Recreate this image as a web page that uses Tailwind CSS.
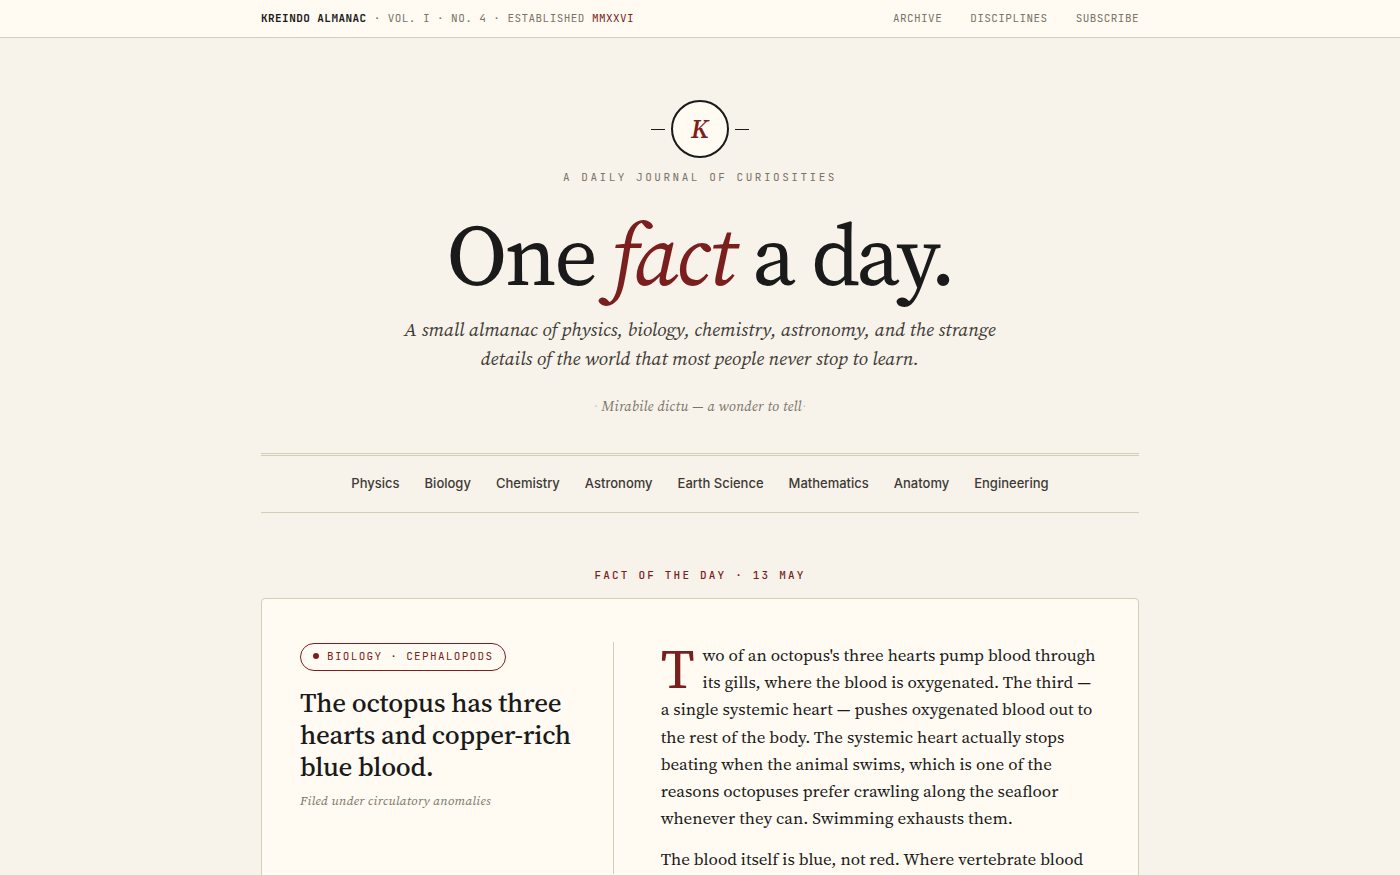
<!DOCTYPE html>
<html lang="en">
<head>
  <meta charset="UTF-8">
  <meta name="viewport" content="width=device-width, initial-scale=1.0">
  <title>Kreindo Almanac</title>
  <script src="https://cdn.jsdelivr.net/npm/@tailwindcss/browser@4"></script>
</head>
<body class="bg-[#f7f2ea] text-[#1a1a1a] font-['Source_Serif_4','Liberation_Serif',serif]">
  <div class="bg-[#fffbf2] border-b border-[#d4cdb8]">
    <div class="max-w-[878px] mx-auto pt-2.5 pb-[11px] flex items-center justify-between font-['JetBrains_Mono','Liberation_Mono',monospace] text-[11px] leading-4 tracking-[0.04em] uppercase text-[#7a7468]">
      <p><strong class="font-semibold text-[#1a1a1a]">Kreindo Almanac</strong> · Vol. I · No. 4 · Established <span class="text-[#7b1e1e]">MMXXVI</span></p>
      <nav class="flex gap-7">
        <a href="#archive">Archive</a>
        <a href="#disciplines">Disciplines</a>
        <a href="#subscribe">Subscribe</a>
      </nav>
    </div>
  </div>

  <div class="max-w-[878px] mx-auto">
    <header class="pt-[62px] flex flex-col items-center text-center">
      <div class="flex items-center gap-1.5">
        <span class="w-3.5 h-px bg-[#1a1a1a]"></span>
        <span class="w-[58px] h-[58px] rounded-full border-2 border-[#1a1a1a] bg-[#fffbf2] flex items-center justify-center text-[26px] leading-none font-semibold italic text-[#7b1e1e]">K</span>
        <span class="w-3.5 h-px bg-[#1a1a1a]"></span>
      </div>
      <p class="mt-[11px] font-['JetBrains_Mono','Liberation_Mono',monospace] text-[11px] leading-4 tracking-[0.23em] uppercase text-[#7a7468]">A daily journal of curiosities</p>
      <h1 class="mt-6 text-[86px] leading-[92px] tracking-[-0.03em]">One <em class="text-[#7b1e1e]">fact</em> a day.</h1>
      <p class="mt-3.5 max-w-[620px] text-[19px] leading-[29px] italic text-[#3d3a35]">A small almanac of physics, biology, chemistry, astronomy, and the strange details of the world that most people never stop to learn.</p>
      <p class="mt-[23px] text-sm leading-5 tracking-[0.02em] italic text-[#7a7468]"><span class="text-[#d4cdb8]">·</span> Mirabile dictu — a wonder to tell<span class="text-[#d4cdb8]">·</span></p>
    </header>

    <nav class="mt-[37px] pt-[17px] pb-5 border-t-3 border-double border-[#d4cdb8] flex justify-center gap-[25px] font-['Inter',sans-serif] text-[13px] leading-5 font-medium text-[#3d3a35] shadow-[inset_0_-1px_0_#d4cdb8]">
      <a href="#physics">Physics</a>
      <a href="#biology">Biology</a>
      <a href="#chemistry">Chemistry</a>
      <a href="#astronomy">Astronomy</a>
      <a href="#earth-science">Earth Science</a>
      <a href="#mathematics">Mathematics</a>
      <a href="#anatomy">Anatomy</a>
      <a href="#engineering">Engineering</a>
    </nav>

    <main class="pt-[54px]">
      <p class="text-center font-['JetBrains_Mono','Liberation_Mono',monospace] text-[11px] leading-4 font-medium tracking-[0.2em] uppercase text-[#7b1e1e]">Fact of the day · 13 May</p>
      <article class="mt-[15px] bg-[#fffbf2] border border-[#d4cdb8] rounded px-[38px] py-[43px] grid grid-cols-[5fr_7fr] gap-[47px]">
        <div class="border-r border-[#d4cdb8] flex flex-col items-start">
          <span class="mt-px flex items-center gap-2 pt-1 pb-1.5 px-3 border border-[#7b1e1e] rounded-full font-['JetBrains_Mono','Liberation_Mono',monospace] text-[11px] leading-4 tracking-[0.12em] uppercase text-[#7b1e1e]">
            <span class="w-1.5 h-1.5 rounded-full bg-[#7b1e1e]"></span>Biology · Cephalopods
          </span>
          <h2 class="mt-4 text-[27px] leading-8 font-medium tracking-[-0.01em]">The octopus has three hearts and copper-rich blue blood.</h2>
          <p class="mt-2 text-[13px] leading-5 tracking-[0.02em] italic text-[#7a7468]">Filed under circulatory anomalies</p>
        </div>
        <div class="text-[17px] leading-[1.6]">
          <p class="first-letter:float-left first-letter:text-[56px] first-letter:leading-[54px] first-letter:mr-2 first-letter:text-[#7b1e1e]">Two of an octopus's three hearts pump blood through its gills, where the blood is oxygenated. The third — a single systemic heart — pushes oxygenated blood out to the rest of the body. The systemic heart actually stops beating when the animal swims, which is one of the reasons octopuses prefer crawling along the seafloor whenever they can. Swimming exhausts them.</p>
          <p class="mt-3.5">The blood itself is blue, not red. Where vertebrate blood</p>
        </div>
      </article>
    </main>
  </div>
</body>
</html>
